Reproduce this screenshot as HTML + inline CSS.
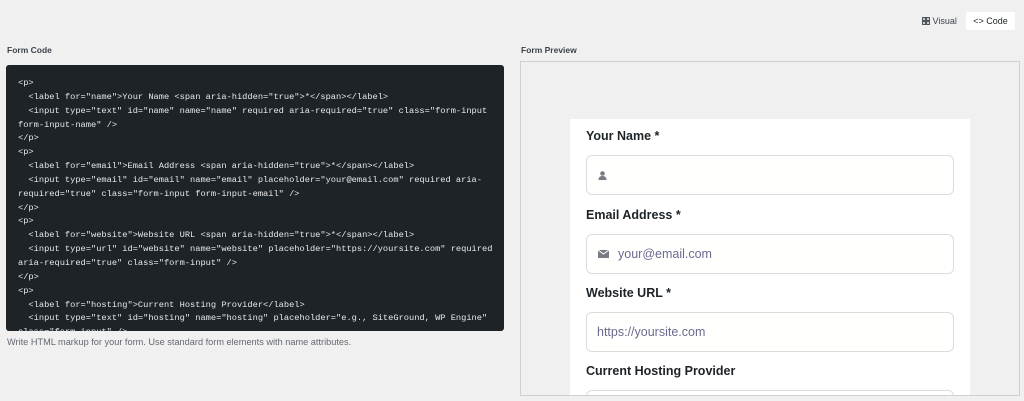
<!DOCTYPE html>
<html><head><style>
*{box-sizing:border-box;margin:0;padding:0}
html,body{overflow:hidden}
body{width:1024px;height:401px;background:#f0f0f1;font-family:"Liberation Sans",sans-serif;position:relative;color:#1d2327}
.lbl{position:absolute;font-size:8.5px;font-weight:bold;color:#3c434a}
.code{position:absolute;left:6px;top:65px;width:498px;height:266px;background:#1e2327;border-radius:3px;overflow:hidden;padding:12px 0 0 12px}
.code pre{font-family:"Liberation Mono",monospace;font-size:8.7px;line-height:13.85px;color:#e8e8e8;white-space:pre}
.help{position:absolute;left:7px;top:337px;font-size:9.2px;color:#646970}
.prev{position:absolute;left:520px;top:61px;width:500px;height:335px;border:1px solid #d0d0d0;background:#f0f0f1;overflow:hidden}
.card{position:absolute;left:49px;top:57px;width:400px;height:300px;background:#fff}
.fl{position:absolute;left:16px;font-size:12.5px;font-weight:bold;color:#1d2327}
.in{position:absolute;left:16px;width:368px;height:40px;border:1px solid #dcdcde;border-radius:6px;background:#fffffd;font-size:12.5px;color:#6b6b90;padding-left:31px;line-height:38px}
.in.np{padding-left:10px}
.btn{position:absolute;font-size:9px;color:#3c434a}
</style></head><body>
<div class="btn" style="left:922px;top:16px;">
<svg width="8" height="8" style="vertical-align:-1px"><rect x="0" y="0" width="8" height="8" fill="#50575e"/><path d="M1 1h2v2H1zM5 1h2v2H5zM1 5h2v2H1zM5 5h2v2H5z" fill="#ccc"/></svg> Visual</div>
<div class="btn" style="left:966px;top:12px;width:49px;height:18px;background:#fff;border-radius:2px;text-align:center;line-height:18px;color:#1d2327">&lt;&gt; Code</div>
<div class="lbl" style="left:7px;top:45px">Form Code</div>
<div class="lbl" style="left:521px;top:45px">Form Preview</div>
<div class="code"><pre>&lt;p&gt;
  &lt;label for="name"&gt;Your Name &lt;span aria-hidden="true"&gt;*&lt;/span&gt;&lt;/label&gt;
  &lt;input type="text" id="name" name="name" required aria-required="true" class="form-input
form-input-name" /&gt;
&lt;/p&gt;
&lt;p&gt;
  &lt;label for="email"&gt;Email Address &lt;span aria-hidden="true"&gt;*&lt;/span&gt;&lt;/label&gt;
  &lt;input type="email" id="email" name="email" placeholder="your@email.com" required aria-
required="true" class="form-input form-input-email" /&gt;
&lt;/p&gt;
&lt;p&gt;
  &lt;label for="website"&gt;Website URL &lt;span aria-hidden="true"&gt;*&lt;/span&gt;&lt;/label&gt;
  &lt;input type="url" id="website" name="website" placeholder="https://yoursite.com" required
aria-required="true" class="form-input" /&gt;
&lt;/p&gt;
&lt;p&gt;
  &lt;label for="hosting"&gt;Current Hosting Provider&lt;/label&gt;
  &lt;input type="text" id="hosting" name="hosting" placeholder="e.g., SiteGround, WP Engine"
class="form-input" /&gt;</pre></div>
<div class="help">Write HTML markup for your form. Use standard form elements with name attributes.</div>
<div class="prev"><div class="card">
<div class="fl" style="top:10px">Your Name *</div>
<div class="in" style="top:36px"><svg width="9" height="9" style="position:absolute;left:11px;top:15px"><circle cx="4.5" cy="2.5" r="2.3" fill="#787c82"/><path d="M0.5 9c0-3 1.8-4 4-4s4 1 4 4z" fill="#787c82"/></svg></div>
<div class="fl" style="top:89px">Email Address *</div>
<div class="in" style="top:115px"><svg width="11" height="8" style="position:absolute;left:11px;top:15px"><rect width="11" height="8" fill="#787c82"/><path d="M0 0l5.5 4L11 0" stroke="#fff" stroke-width="1" fill="none"/></svg>your@email.com</div>
<div class="fl" style="top:167px">Website URL *</div>
<div class="in np" style="top:193px">https://yoursite.com</div>
<div class="fl" style="top:245px">Current Hosting Provider</div>
<div class="in" style="top:271px"></div>
</div></div>
</body></html>
